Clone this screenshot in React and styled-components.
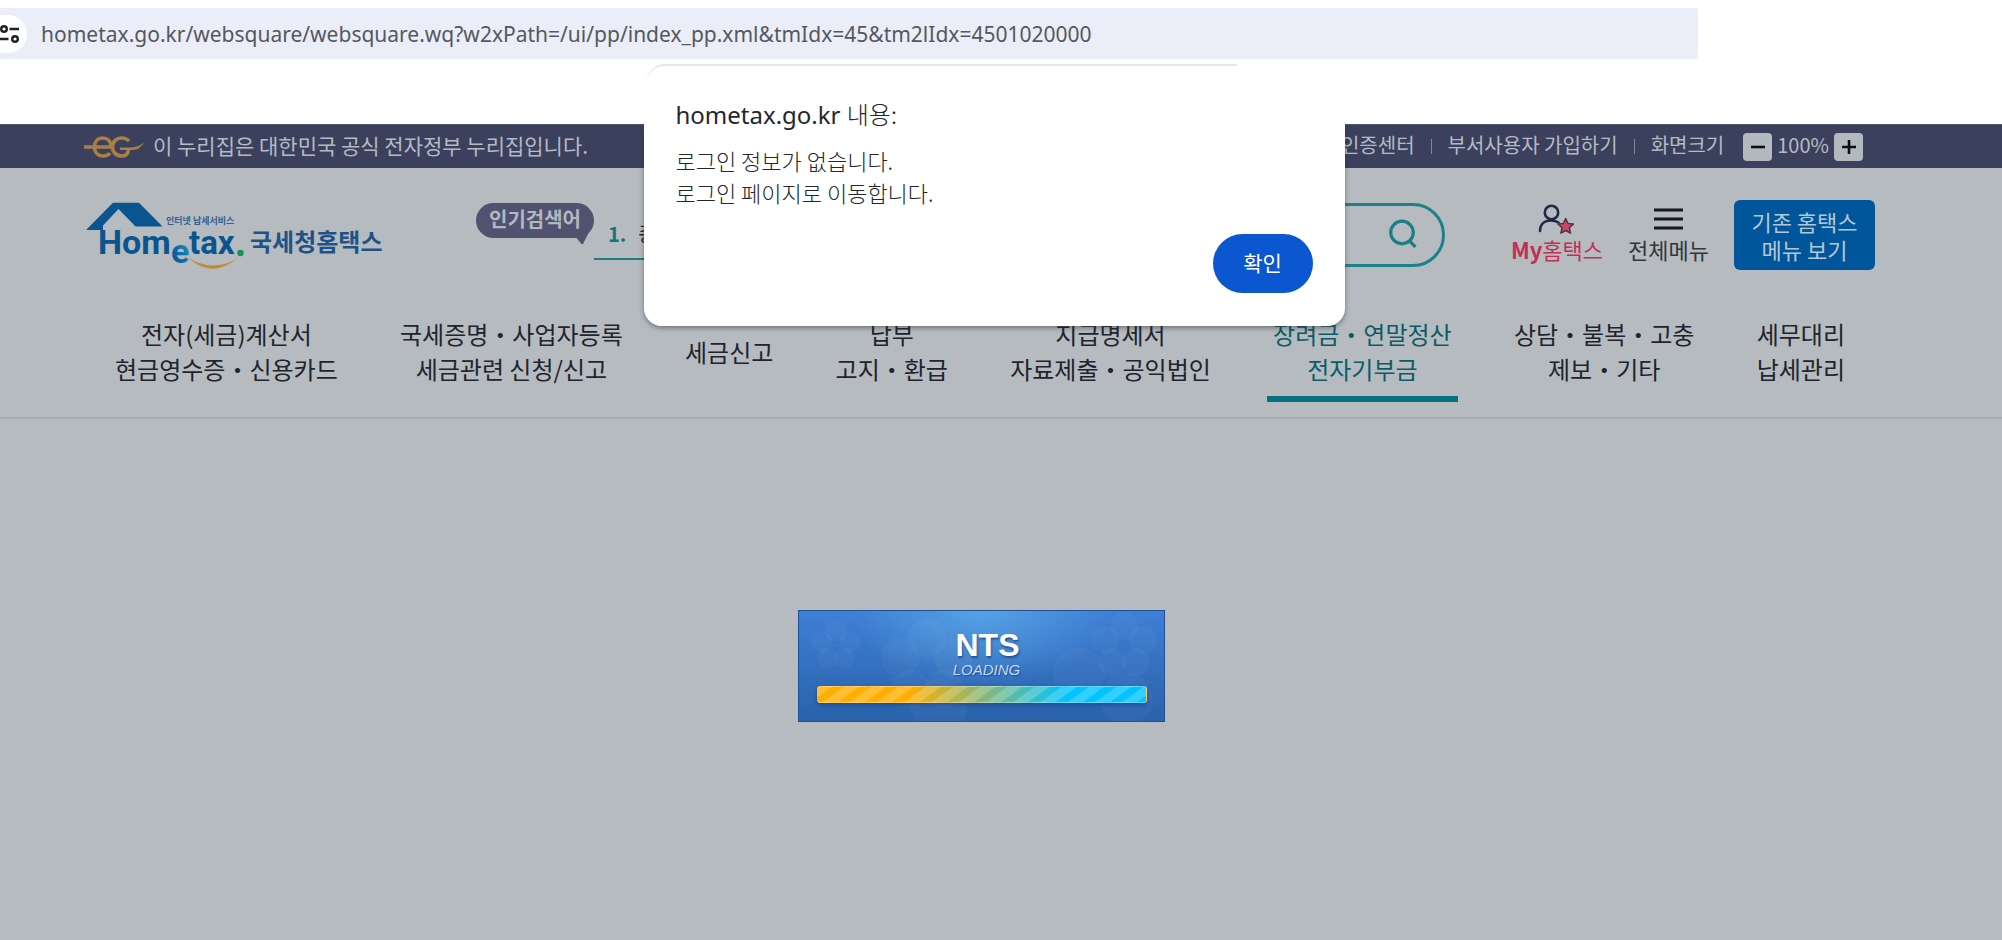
import React from 'react';
import styled, { createGlobalStyle } from 'styled-components';

const SANS = '"Noto Sans CJK KR", "Noto Sans", sans-serif';

const GlobalStyle = createGlobalStyle`
  *, *::before, *::after { box-sizing: border-box; }
  body { margin: 0; background: #b6bbbf; font-family: ${SANS}; color: #20242c; }
  button, input { font: inherit; }
  button { border: 0; padding: 0; cursor: pointer; }
  a { color: inherit; text-decoration: none; }
  ul { list-style: none; margin: 0; padding: 0; }
  svg { display: block; flex: none; }
`;

const Page = styled.div`
  position: relative;
  min-height: 100vh;
  overflow: hidden;
`;

/* Browser strip */
const BrowserStrip = styled.div`
  height: 124px;
  padding-top: 8px;
  background: #fff;
`;
const AddressBar = styled.div`
  display: flex;
  align-items: center;
  gap: 14px;
  width: calc(100% - 304px);
  height: 51px;
  background: #ebedf8;
`;
const SiteInfoButton = styled.button`
  display: flex;
  align-items: center;
  justify-content: flex-end;
  width: 27px;
  height: 38px;
  padding-right: 8px;
  border-radius: 0 19px 19px 0;
  background: #fff;
`;
const AddressText = styled.span`
  font: 400 21px/32px "Noto Sans", sans-serif;
  color: #55585e;
  white-space: nowrap;
`;

/* Government bar */
const GovBar = styled.div`
  display: flex;
  align-items: center;
  justify-content: space-between;
  height: 44px;
  padding: 0 139px 0 84px;
  background: #3b415c;
  border-top: 1px solid #4f566e;
  color: #b4bac5;
  white-space: nowrap;
`;
const GovNotice = styled.div`
  display: flex;
  align-items: center;
  gap: 8px;
  font-size: 21px;
  line-height: 28px;
`;
const BarText = styled.span`
  padding-bottom: 3px;
`;
const Utilities = styled.div`
  display: flex;
  align-items: center;
  font-size: 20px;
  line-height: 28px;
`;
const Divider = styled.span`
  width: 1px;
  height: 15px;
  margin: 0 16px;
  background: #81879a;
`;
const ZoomControl = styled.div`
  display: flex;
  align-items: center;
  gap: 5px;
  margin-left: 19px;
`;
const ZoomButton = styled.button`
  display: flex;
  align-items: center;
  justify-content: center;
  width: 29px;
  height: 28px;
  border-radius: 4px;
  background: #b3babf;
`;

/* Header */
const Header = styled.header`
  padding: 32px 127px 15px 85px;
  border-bottom: 2px solid #a6abb0;
`;
const HeaderRow = styled.div`
  display: flex;
  align-items: center;
  justify-content: space-between;
  height: 70px;
`;
const HeaderGroup = styled.div`
  display: flex;
  align-items: center;
  gap: ${p => p.$gap}px;
  height: 70px;
`;
const Popular = styled.div`
  display: flex;
  align-items: flex-start;
  height: 70px;
  padding-top: 3px;
`;
const PopularBadge = styled.span`
  position: relative;
  width: 118px;
  height: 35px;
  border-radius: 18px;
  background: #50536f;
  color: #b3b7c2;
  font-size: 20px;
  font-weight: 700;
  line-height: 32px;
  text-align: center;
  &::after {
    content: "";
    position: absolute;
    right: 3px;
    bottom: -6px;
    width: 16px;
    height: 16px;
    background: #50536f;
    clip-path: polygon(0 50%, 100% 0, 50% 100%, 40% 100%);
  }
`;
const PopularItem = styled.a`
  display: flex;
  gap: 12px;
  width: 200px;
  height: 57px;
  padding: 17px 14px 0;
  border-bottom: 2px solid #1f7d80;
  font-size: 20px;
  line-height: 28px;
`;
const Rank = styled.strong`
  color: #137580;
  font-weight: 700;
`;
const SearchForm = styled.form`
  display: flex;
  align-items: center;
  width: 500px;
  height: 64px;
  margin-right: 41px;
  padding: 0 25px 3px;
  border: 3px solid #1c8289;
  border-radius: 32px;
`;
const SearchInput = styled.input`
  flex: 1;
  min-width: 0;
  border: 0;
  outline: 0;
  background: transparent;
  font-size: 20px;
`;
const SearchButton = styled.button`
  background: none;
`;
const IconLink = styled.a`
  display: flex;
  flex-direction: column;
  align-items: center;
  padding-bottom: 4px;
  color: ${p => (p.$accent ? '#c22f55' : '#33373d')};
  font-size: 22px;
  line-height: 28px;
  white-space: nowrap;
`;
const IconSlot = styled.span`
  display: flex;
  align-items: center;
  height: 31px;
`;
const LegacyButton = styled.button`
  width: 141px;
  height: 70px;
  border-radius: 6px;
  background: #00569b;
  color: #b5c6d4;
  font-size: 22px;
  line-height: 28px;
`;

/* Main menu */
const MenuList = styled.ul`
  display: flex;
  justify-content: space-between;
  margin-top: 46px;
  padding: 0 24px;
`;
const MenuItem = styled.li`
  display: flex;
`;
const MenuLink = styled.a`
  display: flex;
  flex-direction: column;
  justify-content: center;
  padding: 0 6px 10px;
  border-bottom: 6px solid ${p => (p.$active ? '#05717f' : 'transparent')};
  color: ${p => (p.$active ? '#0b5c68' : '#20242c')};
  font-size: 24px;
  line-height: 35px;
  text-align: center;
  white-space: nowrap;
`;

/* Loading panel */
const Main = styled.main`
  display: flex;
  justify-content: center;
  padding: 191px 40px 0 0;
`;
const LoadingPanel = styled.section`
  position: relative;
  width: 367px;
  height: 112px;
  padding: 17px 17px 0 18px;
  overflow: hidden;
  border: 1px solid #1f4f95;
  background:
    radial-gradient(ellipse 130px 75px at 50% 0, rgba(100, 185, 240, 0.6), transparent),
    linear-gradient(#3f7fd6, #2a62ab);
  text-align: center;
  font-family: "Liberation Sans", sans-serif;
`;
const PanelArt = styled.svg`
  position: absolute;
  inset: 0;
`;
const LoadingTitle = styled.div`
  position: relative;
  color: #fff;
  font-size: 32px;
  font-weight: 700;
  line-height: 34px;
  padding-left: 12px;
  text-shadow: 1px 2px 2px rgba(20, 50, 100, 0.6);
`;
const LoadingLabel = styled.div`
  position: relative;
  color: #c3daf5;
  font-size: 15px;
  font-style: italic;
  line-height: 16px;
  padding-left: 10px;
  text-shadow: 1px 1px 1px rgba(20, 50, 100, 0.6);
`;
const LoadingBar = styled.div`
  position: relative;
  height: 17px;
  margin-top: 8px;
  border: 1px solid rgba(255, 255, 255, 0.3);
  border-radius: 3px;
  background:
    repeating-linear-gradient(144deg, rgba(255, 255, 255, 0.2) 0 7px, transparent 9px 14px, rgba(255, 255, 255, 0.2) 16px),
    linear-gradient(90deg, #ffae00 28%, #00c3ff 76%);
  box-shadow: 0 2px 4px rgba(15, 50, 110, 0.5);
`;

/* Alert */
const AlertLayer = styled.div`
  position: absolute;
  inset: 0;
  display: flex;
  align-items: flex-start;
  justify-content: center;
  padding: 64px 14px 0 0;
`;
const AlertBox = styled.div`
  position: relative;
  z-index: 0;
  display: flex;
  flex-direction: column;
  width: 701px;
  padding: 34px 32px 33px;
  color: #24262a;
  &::before {
    content: "";
    position: absolute;
    z-index: -1;
    inset: 60px 0 0;
    border-radius: 0 0 18px 18px;
    box-shadow: 0 2px 5px rgba(40, 45, 50, 0.5);
  }
  &::after {
    content: "";
    position: absolute;
    z-index: -1;
    inset: 0;
    border-radius: 18px;
    background: #fff;
  }
`;
const AlertEdge = styled.span`
  position: absolute;
  top: 0;
  left: 3px;
  width: 590px;
  height: 18px;
  border-top: 2px solid #e3e8e7;
  border-radius: 18px 0 0 0;
`;
const AlertTitle = styled.h1`
  margin: 0;
  font: 400 24px/32px "Noto Sans", "Noto Sans CJK KR", sans-serif;
`;
const AlertHangul = styled.span`
  font-family: ${SANS};
  font-weight: 300;
`;
const AlertText = styled.p`
  margin: 13px 0 26px;
  font-size: 22px;
  font-weight: 300;
  line-height: 32px;
`;
const AlertButton = styled.button`
  align-self: flex-end;
  width: 100px;
  height: 59px;
  padding-bottom: 3px;
  border-radius: 30px;
  background: #0b57d0;
  color: #fff;
  font-size: 21px;
`;

const MENU = [
  ['전자(세금)계산서', '현금영수증・신용카드'],
  ['국세증명・사업자등록', '세금관련 신청/신고'],
  ['세금신고'],
  ['납부', '고지・환급'],
  ['지급명세서', '자료제출・공익법인'],
  ['장려금・연말정산', '전자기부금'],
  ['상담・불복・고충', '제보・기타'],
  ['세무대리', '납세관리'],
];
const ACTIVE_MENU = 5;

const TuneIcon = () => (
  <svg width="19" height="20" viewBox="0 0 19 20" fill="none" stroke="#202226" strokeWidth="2.4">
    <circle cx="4" cy="5" r="2.8" />
    <path d="M9.500 5H19M0 15H8.500" />
    <circle cx="15" cy="15" r="2.8" />
  </svg>
);

const GovMark = () => (
  <svg width="61" height="22" viewBox="0 0 61 22" fill="none" stroke="#a87f45" strokeWidth="3.600">
    <path d="M0 11H27C27 5 23.500 2 18.700 2C13.500 2 10.500 6 10.500 11C10.500 16.500 14 20 19 20C22 20 24.500 19 26 17" />
    <path d="M45 5C43 3 41 2 38 2C32 2 28.500 6 28.500 11C28.500 16 32 20 38 20C42 20 44.500 18 44.500 12.500" />
    <path d="M36 11.500H45C51 11.500 56 9.500 61 6.500L54 13C51 14 48 14 44 14H36Z" fill="#a87f45" stroke="none" />
  </svg>
);

const Logo = () => (
  <svg width="302" height="70" viewBox="0 0 302 70" role="img" aria-label="Hometax 국세청홈택스">
    <defs>
      <linearGradient id="logoE" x1="0" x2="1" y1="1" y2="0">
        <stop offset="0.3" stopColor="#0a5ba0" />
        <stop offset="1" stopColor="#1fa5bd" />
      </linearGradient>
      <linearGradient id="logoSmile" x1="0" x2="1">
        <stop offset="0" stopColor="#b9924f" />
        <stop offset="0.6" stopColor="#c9842c" />
        <stop offset="1" stopColor="#b9a070" />
      </linearGradient>
    </defs>
    <path d="M1.500 29.500L28 2.700H54L77.500 26.500H50.500L33.500 9L18 25.500V30H2Z" fill="#0a5590" />
    <g fontFamily="Roboto, sans-serif" fontWeight="700" fill="#0a5590">
      <text x="13" y="54" fontSize="34">Hom</text>
      <text x="104" y="54" fontSize="33">tax</text>
      <text x="86" y="63" fontSize="34" fill="url(#logoE)">e</text>
    </g>
    <circle cx="155.500" cy="53" r="3.200" fill="#149354" />
    <path d="M102 57Q127 80 153 58Q127 73.500 102 57Z" fill="url(#logoSmile)" />
    <g fontFamily='"Noto Sans CJK KR", sans-serif' fontWeight="700">
      <text x="81" y="24" fontSize="9" fill="#33618f">인터넷 납세서비스</text>
      <text x="165" y="51" fontSize="24" fill="#1f5388">국세청홈택스</text>
    </g>
  </svg>
);

const SearchIcon = () => (
  <svg width="28" height="29" viewBox="0 0 28 29" fill="none" stroke="#1b7f87" strokeWidth="3.200">
    <circle cx="13" cy="13.500" r="11.300" />
    <path d="M20 21.500L26.500 28" />
  </svg>
);

const MyIcon = () => (
  <svg width="37" height="31" viewBox="0 0 37 31" fill="none" stroke="#20294a" strokeWidth="2.600" strokeLinecap="round">
    <circle cx="13.500" cy="8.500" r="6.700" />
    <path d="M2 27C2 20 6.500 16.500 13 16.500C16 16.500 18 17 20.500 18.500" />
    <path
      d="M27.700 14.500L30 19.500L35.300 20.100L31.300 23.700L32.500 29.200L27.700 26.500L22.900 29.200L24.100 23.700L20.100 20.100L25.400 19.500Z"
      fill="#c94a62" stroke="#5a2f48" strokeWidth="1.500" strokeLinejoin="round"
    />
  </svg>
);

const MenuIcon = () => (
  <svg width="29" height="22" viewBox="0 0 29 22" stroke="#15181c" strokeWidth="3">
    <path d="M0 2H29M0 11H29M0 20H29" />
  </svg>
);

const SignIcon = ({ plus }) => (
  <svg width="16" height="16" viewBox="0 0 16 16" stroke="#0c0e12" strokeWidth="2.600">
    <path d={plus ? 'M1 8H15M8 1V15' : 'M1 8H15'} />
  </svg>
);

const Flower = ({ x, y, r }) => (
  <g transform={`translate(${x} ${y})`}>
    {[0, 72, 144, 216, 288].map(a => (
      <circle key={a} cx="0" cy={-r} r={r * 0.7} transform={`rotate(${a})`} />
    ))}
  </g>
);

export default function App() {
  return (
    <Page>
      <GlobalStyle />
      <BrowserStrip>
        <AddressBar>
          <SiteInfoButton aria-label="사이트 정보"><TuneIcon /></SiteInfoButton>
          <AddressText>
            hometax.go.kr/websquare/websquare.wq?w2xPath=/ui/pp/index_pp.xml&amp;tmIdx=45&amp;tm2lIdx=4501020000
          </AddressText>
        </AddressBar>
      </BrowserStrip>

      <GovBar>
        <GovNotice>
          <GovMark />
          <BarText>이 누리집은 대한민국 공식 전자정부 누리집입니다.</BarText>
        </GovNotice>
        <Utilities>
          <BarText as="a" href="#cert">인증센터</BarText>
          <Divider />
          <BarText as="a" href="#join">부서사용자 가입하기</BarText>
          <Divider />
          <BarText>화면크기</BarText>
          <ZoomControl>
            <ZoomButton aria-label="축소"><SignIcon /></ZoomButton>
            <BarText>100%</BarText>
            <ZoomButton aria-label="확대"><SignIcon plus /></ZoomButton>
          </ZoomControl>
        </Utilities>
      </GovBar>

      <Header>
        <HeaderRow>
          <HeaderGroup $gap={89}>
            <a href="#home"><Logo /></a>
            <Popular>
              <PopularBadge>인기검색어</PopularBadge>
              <PopularItem href="#rank"><Rank>1.</Rank>종</PopularItem>
            </Popular>
          </HeaderGroup>
          <HeaderGroup $gap={25}>
            <SearchForm>
              <SearchInput aria-label="검색어" />
              <SearchButton type="button" aria-label="검색"><SearchIcon /></SearchButton>
            </SearchForm>
            <IconLink href="#my" $accent>
              <IconSlot><MyIcon /></IconSlot>
              <span><b>My</b>홈택스</span>
            </IconLink>
            <IconLink href="#all">
              <IconSlot><MenuIcon /></IconSlot>
              전체메뉴
            </IconLink>
            <LegacyButton>기존 홈택스<br />메뉴 보기</LegacyButton>
          </HeaderGroup>
        </HeaderRow>
        <nav>
          <MenuList>
            {MENU.map((lines, i) => (
              <MenuItem key={lines[0]}>
                <MenuLink href="#menu" $active={i === ACTIVE_MENU}>
                  {lines.map(line => <span key={line}>{line}</span>)}
                </MenuLink>
              </MenuItem>
            ))}
          </MenuList>
        </nav>
      </Header>

      <Main>
        <LoadingPanel>
          <PanelArt width="367" height="112" viewBox="0 0 367 112" fill="#fff" fillOpacity="0.03">
            <Flower x={37} y={35} r={15} />
            <Flower x={128} y={55} r={28} />
            <Flower x={325} y={35} r={20} />
            <circle cx="280" cy="62" r="26" />
            <circle cx="328" cy="88" r="26" />
            <circle cx="140" cy="96" r="28" />
          </PanelArt>
          <LoadingTitle>NTS</LoadingTitle>
          <LoadingLabel>LOADING</LoadingLabel>
          <LoadingBar role="progressbar" aria-label="LOADING" />
        </LoadingPanel>
      </Main>

      <AlertLayer>
        <AlertBox role="alertdialog" aria-modal="true" aria-labelledby="alert-title">
          <AlertEdge />
          <AlertTitle id="alert-title">hometax.go.kr <AlertHangul>내용:</AlertHangul></AlertTitle>
          <AlertText>로그인 정보가 없습니다.<br />로그인 페이지로 이동합니다.</AlertText>
          <AlertButton>확인</AlertButton>
        </AlertBox>
      </AlertLayer>
    </Page>
  );
}
